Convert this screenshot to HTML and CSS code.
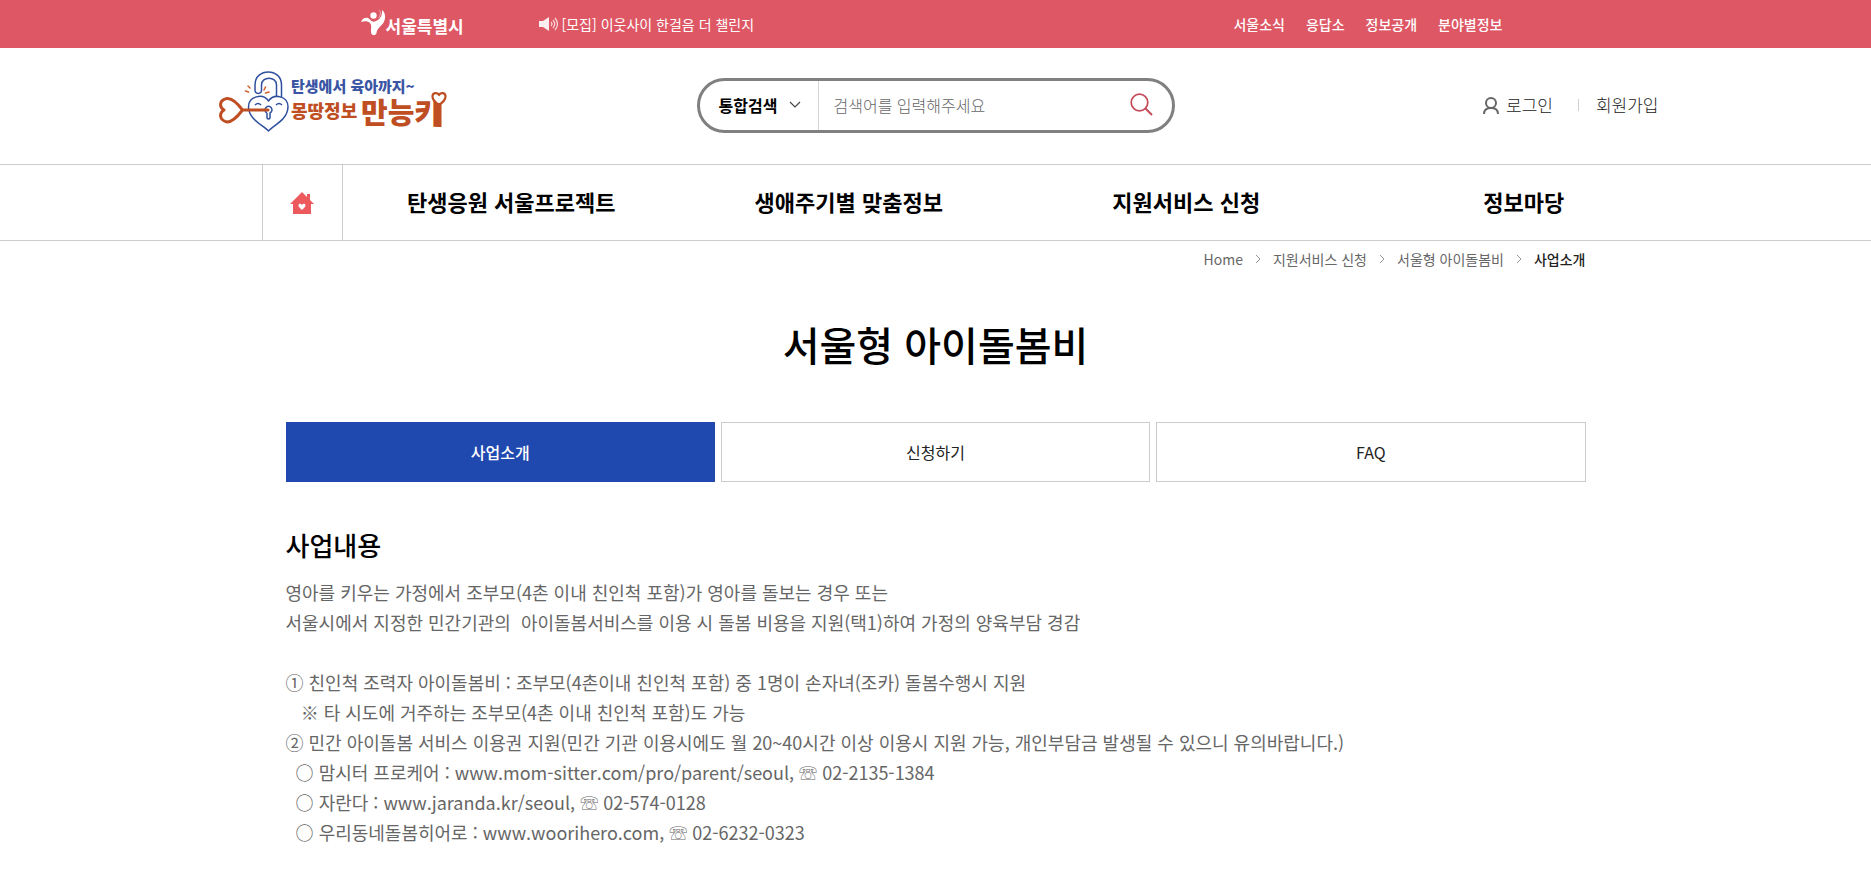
FILE: index.html
```html
<!DOCTYPE html>
<html lang="ko">
<head>
<meta charset="utf-8">
<meta name="viewport" content="width=device-width, initial-scale=1">
<title>서울형 아이돌봄비</title>
<link rel="stylesheet" href="styles.css">
</head>
<body>
<div class="topbar">
  <div class="topbar-inner">
    <a class="seoul" href="#">
      <svg class="seoul-mark" viewBox="0 0 25 27" aria-hidden="true">
        <circle cx="12.500" cy="6.500" r="3.200" fill="#fff"/>
        <path d="M0 13C1.500 8.500 6 7.500 8.500 10C10.500 12.500 12.500 13.500 15 12C19.500 10 21.500 6 21 1C25 4 25 10 22 14.500C18 19 16 20 15.500 24C15 27 10 27 10 23C10 18 11 16 8.500 13.500C5.500 11.500 3 12 0 13Z" fill="#fff"/>
        <path d="M18 1C20.500 3 19.500 7 17.500 9" fill="none" stroke="#fff" stroke-width="1" opacity=".5"/>
      </svg>
      <span>서울특별시</span>
    </a>
    <a class="notice" href="#">
      <svg class="speaker" viewBox="0 0 19 14" aria-hidden="true">
        <path d="M0 4h4l6-4v14l-6-4H0z" fill="#fff" opacity=".9"/>
        <path d="M12 5q2 2 0 4M14 3q3.500 4 0 8M16 1q5 6 0 12" fill="none" stroke="#fff" stroke-width="1.200" opacity=".75"/>
      </svg>
      <span>[모집] 이웃사이 한걸음 더 챌린지</span>
    </a>
    <nav class="top-links" aria-label="서울시">
      <a href="#">서울소식</a><a href="#">응답소</a><a href="#">정보공개</a><a href="#">분야별정보</a>
    </nav>
  </div>
</div>

<header class="header">
  <a class="logo" href="#">
    <svg viewBox="0 0 230 62" role="img" aria-label="탄생에서 육아까지~ 몽땅정보 만능키">
      <g fill="none" stroke="#2f4f9f" stroke-width="1.500" stroke-linejoin="round">
        <path d="M63.500 27V14C63.500-3.500 37-3.500 37 14V19C37 23.500 43.500 23.500 43.500 19V14C43.500 5 58.500 5 58.500 14V25"/>
        <path d="M50.500 60C45 54 31 49 30.500 36C30.500 25 45 22 50.500 30C56 22 70 25 70 36C69.500 49 56 54 50.500 60Z"/>
        <path d="M37 34q3-3 6 0M58 34q3-3 6 0"/>
        <path d="M49 42V47q1.500 2 3 0V42A3.500 3.500 0 1 0 49 42"/>
      </g>
      <path d="M24.500 39H50M24.500 39C20 45 15 51 9 51C1 49 1 42 6 39C1 36 1 29 9 27.500C15 27 20 33 24.500 39Z" fill="none" stroke="#bf4e23" stroke-width="3" stroke-linecap="round" stroke-linejoin="round"/>
      <path d="M30 15l2 2M27.500 20l3 1M46 19l1.500-3M47.500 22l3.500-1" fill="none" stroke="#d5612f" stroke-width="1.500" stroke-linecap="round"/>
      <text class="logo-top" x="73" y="21">탄생에서 육아까지~</text>
      <text class="logo-mid" x="73" y="47">몽땅정보</text>
      <text class="logo-big" x="143" y="53">만능키</text>
      <path d="M221 33V56" stroke="#bf4e23" stroke-width="5"/>
      <path d="M221 34C217 31 214.500 29 214.500 25.500C214.500 21.500 219 21 221 24C223 21 227.500 21.500 227.500 25.500C227.500 29 225 31 221 34Z" fill="#fff" stroke="#bf4e23" stroke-width="2.200" stroke-linejoin="round"/>
    </svg>
  </a>
  <form class="search" role="search">
    <button class="search-kind" type="button" aria-haspopup="listbox">
      <span>통합검색</span>
      <svg viewBox="0 0 12 8" aria-hidden="true"><path d="M1 1l5 5 5-5" fill="none" stroke="#444" stroke-width="1.200"/></svg>
    </button>
    <input class="search-input" type="text" aria-label="검색어" placeholder="검색어를 입력해주세요">
    <button class="search-go" type="submit" aria-label="검색">
      <svg viewBox="0 0 24 24" aria-hidden="true"><path d="M15.500 15.500L22 22" stroke="#c44b58" stroke-width="2"/><circle cx="9.500" cy="9.500" r="8.300" fill="none" stroke="#c44b58" stroke-width="1.700"/></svg>
    </button>
  </form>
  <div class="account">
    <a class="login" href="#">
      <svg viewBox="0 0 16 17" aria-hidden="true"><circle cx="8" cy="6" r="5" fill="none" stroke="#666" stroke-width="2"/><path d="M1 17C1 13 4 11 8 11S15 13 15 17" fill="none" stroke="#666" stroke-width="2"/></svg>
      <span>로그인</span>
    </a>
    <a class="join" href="#">회원가입</a>
  </div>
</header>

<nav class="gnb" aria-label="주 메뉴">
  <div class="gnb-inner">
    <a class="home" href="#" aria-label="홈">
      <svg viewBox="0 0 24 22" aria-hidden="true"><path d="M12 0l5 5V2h3v6l4 4h-3v10H3V12H0z" fill="#ec5a5e"/><path d="M12 18C9 15 8.500 14.500 8.500 13.500C8.500 11.500 11 11.300 12 13C13 11.300 15.500 11.500 15.500 13.500C15.500 14.500 15 15 12 18Z" fill="#fff"/></svg>
    </a>
    <a class="menu" href="#">탄생응원 서울프로젝트</a>
    <a class="menu" href="#">생애주기별 맞춤정보</a>
    <a class="menu" href="#">지원서비스 신청</a>
    <a class="menu" href="#">정보마당</a>
  </div>
</nav>

<main class="content">
  <nav class="crumbs" aria-label="현재 위치">
    <a href="#">Home</a>
    <svg viewBox="0 0 6 10" aria-hidden="true"><path d="M1 1l4 4-4 4"/></svg>
    <a href="#">지원서비스 신청</a>
    <svg viewBox="0 0 6 10" aria-hidden="true"><path d="M1 1l4 4-4 4"/></svg>
    <a href="#">서울형 아이돌봄비</a>
    <svg viewBox="0 0 6 10" aria-hidden="true"><path d="M1 1l4 4-4 4"/></svg>
    <a class="here" href="#" aria-current="page">사업소개</a>
  </nav>
  <h1 class="title">서울형 아이돌봄비</h1>
  <nav class="tabs" aria-label="서울형 아이돌봄비">
    <a class="tab tab-on" href="#" aria-current="page">사업소개</a>
    <a class="tab" href="#">신청하기</a>
    <a class="tab" href="#">FAQ</a>
  </nav>
  <section class="body">
    <h2 class="subtitle">사업내용</h2>
    <p class="text">영아를 키우는 가정에서 조부모(4촌 이내 친인척 포함)가 영아를 돌보는 경우 또는
서울시에서 지정한 민간기관의  아이돌봄서비스를 이용 시 돌봄 비용을 지원(택1)하여 가정의 양육부담 경감

① 친인척 조력자 아이돌봄비 : 조부모(4촌이내 친인척 포함) 중 1명이 손자녀(조카) 돌봄수행시 지원
   ※ 타 시도에 거주하는 조부모(4촌 이내 친인척 포함)도 가능
② 민간 아이돌봄 서비스 이용권 지원(민간 기관 이용시에도 월 20~40시간 이상 이용시 지원 가능, 개인부담금 발생될 수 있으니 유의바랍니다.)
  ○ 맘시터 프로케어 : www.mom-sitter.com/pro/parent/seoul, ☏ 02-2135-1384
  ○ 자란다 : www.jaranda.kr/seoul, ☏ 02-574-0128
  ○ 우리동네돌봄히어로 : www.woorihero.com, ☏ 02-6232-0323</p>
  </section>
</main>
</body>
</html>
```
FILE: styles.css
```css
* { box-sizing: border-box; }
body {
  margin: 0;
  background: #fff;
  color: #000;
  font-family: "Noto Sans CJK KR", "Noto Sans", sans-serif;
  font-size: 16px;
  line-height: 24px;
}
a { color: inherit; text-decoration: none; white-space: nowrap; }
button, input { font: inherit; border: 0; background: none; padding: 0; }
svg { display: block; flex: none; }

.topbar { background: #de5765; color: #fff; font-size: 14px; }
.topbar-inner {
  display: flex;
  align-items: center;
  max-width: 1150px;
  height: 48px;
  margin: 0 auto;
}
.seoul { display: flex; align-items: center; width: 178px; font-size: 17px; font-weight: 700; }
.seoul span { padding-top: 4px; }
.seoul-mark { width: 25px; height: 27px; margin-bottom: 4px; }
.notice { display: flex; align-items: center; gap: 4px; }
.speaker { width: 19px; height: 14px; }
.top-links { display: flex; gap: 21px; margin: 0 8px 0 auto; font-weight: 500; }

.header {
  display: grid;
  grid-template-columns: 1fr 478px 1fr;
  align-items: center;
  max-width: 1446px;
  height: 116px;
  margin: 0 auto;
}
.logo { justify-self: start; margin: 0 0 8px 5px; }
.logo svg { width: 230px; height: 62px; }
.logo text { font-family: "Noto Sans CJK KR", sans-serif; font-weight: 900; }
.logo-top { font-size: 15px; fill: #3a55a4; }
.logo-mid { font-size: 18px; fill: #bf4e23; }
.logo-big { font-size: 29px; fill: #bf4e23; }
.search {
  display: flex;
  height: 55px;
  margin-bottom: 2px;
  border: 3px solid #808080;
  border-radius: 28px;
}
.search-kind {
  display: flex;
  align-items: center;
  gap: 12px;
  width: 119px;
  padding-left: 19px;
  border-right: 1px solid #d5d5d5;
  font-weight: 700;
  color: #000;
}
.search-kind svg { width: 12px; height: 8px; }
.search-input { flex: 1; min-width: 0; padding: 0 15px; font-weight: 300; outline: 0; }
.search-input::placeholder { color: #666; opacity: 1; }
.search-go { padding: 0 18px; }
.search-go svg { width: 24px; height: 24px; }
.account { display: flex; align-items: center; justify-self: end; margin-bottom: 2px; font-size: 17px; font-weight: 300; color: #222; }
.login { display: flex; align-items: center; gap: 7px; }
.login svg { width: 16px; height: 17px; }
.join { display: flex; align-items: center; margin-left: 25px; }
.join::before { content: ""; height: 12px; margin-right: 17px; border-left: 1px solid #d0d0d0; }

.gnb { border-top: 1px solid #ccc; border-bottom: 1px solid #ccc; }
.gnb-inner {
  display: grid;
  grid-template-columns: 81px repeat(4, 1fr);
  align-items: center;
  height: 75px;
  max-width: 1431px;
  margin-left: calc(50% - 674px);
}
.home {
  display: flex;
  align-items: center;
  justify-content: center;
  height: 100%;
  border: solid #ccc;
  border-width: 0 1px;
}
.home svg { width: 24px; height: 22px; }
.menu { padding-bottom: 4px; text-align: center; font-size: 22px; line-height: 32px; font-weight: 700; }

.content { max-width: 1300px; margin: 0 auto; }
.crumbs {
  display: flex;
  align-items: center;
  justify-content: flex-end;
  gap: 12px;
  padding-top: 6px;
  font-size: 14px;
  color: #666;
}
.crumbs svg { width: 6px; height: 10px; fill: none; stroke: #999; }
.crumbs .here { font-weight: 500; color: #222; }
.title { margin: 42px 0 47px; text-align: center; font-size: 40px; line-height: 62px; font-weight: 500; }
.tabs { display: grid; grid-template-columns: repeat(3, 1fr); gap: 6px; }
.tab {
  border: 1px solid #ccc;
  text-align: center;
  line-height: 58px;
  color: #222;
}
.tab-on { background: #2049b0; border-color: #2049b0; color: #fff; font-weight: 500; }
.subtitle { margin: 43px 0 12px; font-size: 26px; line-height: 40px; font-weight: 500; }
.text { margin: 0; white-space: pre-wrap; font-size: 18px; line-height: 30px; color: #666; }
```
